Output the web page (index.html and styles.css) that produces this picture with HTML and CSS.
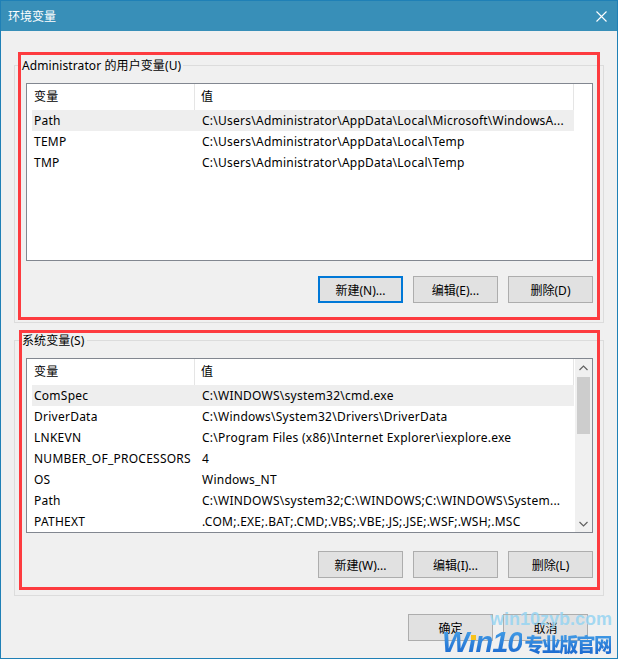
FILE: index.html
```html
<!DOCTYPE html>
<html lang="zh-CN">
<head>
<meta charset="utf-8">
<title>环境变量</title>
<link rel="stylesheet" href="styles.css">
</head>
<body>
<div class="window">
  <div class="titlebar">
    <span class="title">环境变量</span>
    <svg class="close" width="11" height="11" viewBox="0 0 11 11"><path d="M0.5 0.5L10.5 10.5M10.5 0.5L0.5 10.5" stroke="#fff" stroke-width="1.1" fill="none"/></svg>
  </div>
  <div class="content">
    <div class="group g1">
      <div class="legend">Administrator 的用户变量(U)</div>
      <div class="list l1">
        <div class="table">
          <div class="row head"><div class="c1">变量</div><div class="c2">值</div></div>
          <div class="row sel"><div class="c1">Path</div><div class="c2">C:\Users\Administrator\AppData\Local\Microsoft\WindowsA...</div></div>
          <div class="row"><div class="c1">TEMP</div><div class="c2">C:\Users\Administrator\AppData\Local\Temp</div></div>
          <div class="row"><div class="c1">TMP</div><div class="c2">C:\Users\Administrator\AppData\Local\Temp</div></div>
        </div>
      </div>
      <div class="btns">
        <button class="btn focus">新建(N)...</button>
        <button class="btn">编辑(E)...</button>
        <button class="btn">删除(D)</button>
      </div>
    </div>
    <div class="group g2">
      <div class="legend">系统变量(S)</div>
      <div class="list l2">
        <div class="table">
          <div class="row head"><div class="c1">变量</div><div class="c2">值</div></div>
          <div class="row sel"><div class="c1">ComSpec</div><div class="c2">C:\WINDOWS\system32\cmd.exe</div></div>
          <div class="row"><div class="c1">DriverData</div><div class="c2">C:\Windows\System32\Drivers\DriverData</div></div>
          <div class="row"><div class="c1">LNKEVN</div><div class="c2">C:\Program Files (x86)\Internet Explorer\iexplore.exe</div></div>
          <div class="row"><div class="c1">NUMBER_OF_PROCESSORS</div><div class="c2">4</div></div>
          <div class="row"><div class="c1">OS</div><div class="c2">Windows_NT</div></div>
          <div class="row"><div class="c1">Path</div><div class="c2">C:\WINDOWS\system32;C:\WINDOWS;C:\WINDOWS\System...</div></div>
          <div class="row"><div class="c1">PATHEXT</div><div class="c2">.COM;.EXE;.BAT;.CMD;.VBS;.VBE;.JS;.JSE;.WSF;.WSH;.MSC</div></div>
        </div>
        <div class="scroll">
          <div class="arrow"><svg width="9" height="6" viewBox="0 0 9 6"><path d="M0.5 5L4.5 1L8.5 5" stroke="#606060" stroke-width="1.2" fill="none"/></svg></div>
          <div class="thumb"></div>
          <div class="arrow down"><svg width="9" height="6" viewBox="0 0 9 6"><path d="M0.5 1L4.5 5L8.5 1" stroke="#606060" stroke-width="1.2" fill="none"/></svg></div>
        </div>
      </div>
      <div class="btns b2">
        <button class="btn">新建(W)...</button>
        <button class="btn">编辑(I)...</button>
        <button class="btn">删除(L)</button>
      </div>
    </div>
    <div class="footer">
      <button class="btn">确定</button>
      <button class="btn">取消</button>
    </div>
  </div>
  <div class="mark mark1"></div>
  <div class="mark mark2"></div>
  <div class="wm-url">win10zyb.com</div>
  <div class="wm-logo"><span class="wm-en">Wı<span class="dot"></span>n10</span><span class="wm-cn">专业版官网</span></div>
</div>
</body>
</html>
```
FILE: styles.css
```css
html, body {
  margin: 0;
  padding: 0;
  background: #f0f0f0;
}
.window {
  position: relative;
  box-sizing: border-box;
  width: 618px;
  height: 659px;
  border: 1px solid #1f80b6;
  background: #f0f0f0;
  overflow: hidden;
  font-family: "Noto Sans", "Noto Sans CJK SC", sans-serif;
  font-size: 12px;
  color: #000;
}
.titlebar {
  display: flex;
  align-items: center;
  height: 30px;
  background: #388fb8;
  padding: 0 10px 0 7px;
}
.title {
  color: #fff;
  font-family: "Noto Sans CJK SC", sans-serif;
  font-size: 12px;
  line-height: 30px;
}
.close {
  margin-left: auto;
  margin-top: 1px;
}
.content {
  padding: 0 13px;
}
.group {
  border: 1px solid #dcdcdc;
  padding: 0 10px 19px 11px;
}
.g1 {
  margin-top: 34px;
}
.g2 {
  margin-top: 17px;
  padding-bottom: 17px;
}
.legend {
  display: block;
  width: max-content;
  margin: -8px 0 0 -6px;
  height: 16px;
  line-height: 16px;
  padding: 0 2px;
  background: #f0f0f0;
  letter-spacing: 0.1px;
}
.list {
  display: flex;
  box-sizing: border-box;
  width: 567px;
  margin-top: 9px;
  border: 1px solid #828790;
  background: #fff;
  overflow: hidden;
}
.l1 {
  height: 178px;
}
.l2 {
  height: 175px;
}
.table {
  width: 542px;
  margin-left: 5px;
  letter-spacing: 0.25px;
}
.row {
  display: grid;
  grid-template-columns: 163px 379px;
  height: 21px;
  line-height: 21px;
  white-space: nowrap;
}
.row .c1 {
  padding-left: 2px;
  overflow: hidden;
}
.row .c2 {
  padding-left: 7px;
  overflow: hidden;
}
.row.head {
  height: 26px;
  line-height: 26px;
}
.row.head .c1 {
  border-right: 1px solid #e5e5e5;
}
.row.head .c2 {
  padding-left: 6px;
  border-right: 1px solid #e5e5e5;
}
.row.sel {
  background: #eeeeee;
}
.scroll {
  margin-left: auto;
  width: 17px;
  background: #f0f0f0;
  display: flex;
  flex-direction: column;
}
.arrow {
  height: 17px;
  display: flex;
  align-items: center;
  justify-content: center;
}
.arrow.down {
  margin-top: auto;
}
.thumb {
  margin: 1px 2px 0 2px;
  height: 57px;
  background: #cdcdcd;
}
.btns {
  display: flex;
  justify-content: flex-end;
  gap: 10px;
  margin-top: 15px;
}
.b2 {
  margin-top: 18px;
}
.btn {
  box-sizing: border-box;
  width: 85px;
  height: 27px;
  margin: 0;
  padding: 0;
  border: 1px solid #adadad;
  background: #e1e1e1;
  font-family: "Noto Sans", "Noto Sans CJK SC", sans-serif;
  font-size: 12px;
  color: #000;
}
.btn.focus {
  border: 2px solid #0078d7;
}
.footer {
  display: flex;
  justify-content: flex-end;
  gap: 10px;
  margin: 18px 16px 0 0;
}
.mark {
  position: absolute;
  border: 3px solid #fd3b3f;
  box-sizing: border-box;
}
.mark1 {
  left: 17px;
  top: 51px;
  width: 582px;
  height: 268px;
}
.mark2 {
  left: 18px;
  top: 329px;
  width: 581px;
  height: 260px;
}
.wm-url {
  position: absolute;
  left: 489px;
  top: 608px;
  font-family: "Liberation Sans", sans-serif;
  font-weight: bold;
  font-size: 18px;
  color: rgba(150, 212, 242, 0.85);
}
.wm-logo {
  position: absolute;
  left: 441px;
  top: 625px;
  display: flex;
  align-items: baseline;
  color: #1f71d3;
}
.wm-en {
  position: relative;
  font-family: "Liberation Sans", sans-serif;
  font-weight: bold;
  font-style: italic;
  font-size: 29px;
  letter-spacing: -1px;
  background: linear-gradient(#4aa6ea, #1662cc);
  -webkit-background-clip: text;
  background-clip: text;
  color: transparent;
}
.dot {
  position: absolute;
  left: 29px;
  top: 9px;
  width: 5px;
  height: 5px;
  background: #f7c21a;
}
.wm-cn {
  font-family: "Noto Sans CJK SC", sans-serif;
  font-weight: 900;
  font-size: 19px;
  letter-spacing: -1.6px;
  margin-left: 2px;
  background: linear-gradient(#4aa6ea, #1662cc);
  -webkit-background-clip: text;
  background-clip: text;
  color: transparent;
}
```
